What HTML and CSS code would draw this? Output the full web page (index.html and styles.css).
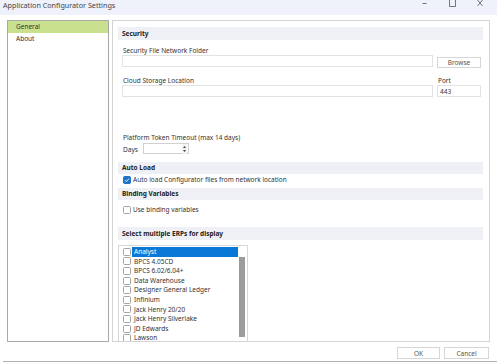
FILE: index.html
```html
<!DOCTYPE html>
<html>
<head>
  <meta charset="utf-8">
  <title>Application Configurator Settings</title>
  <link rel="stylesheet" href="styles.css">
</head>
<body>
  <div class="titlebar">
    <div class="title">Application Configurator Settings</div>
    <div class="window-controls">
      <svg class="ctl" width="6" height="10" viewBox="0 0 6 10"><path d="M0.5 5.5h4" stroke="#555" stroke-width="0.8"/></svg>
      <svg class="ctl" width="7" height="10" viewBox="0 0 7 10"><path d="M0.5 0v8.5h6v-8.5" fill="none" stroke="#555" stroke-width="0.8"/></svg>
      <svg class="ctl" width="6" height="10" viewBox="0 0 6 10"><path d="M0.5 2l5 6M5.5 2l-5 6" stroke="#555" stroke-width="0.8"/></svg>
    </div>
  </div>

  <div class="main">
    <div class="nav">
      <div class="nav-item active">General</div>
      <div class="nav-item">About</div>
    </div>

    <div class="content">
      <div class="section-header first">Security</div>
      <div class="field-grid">
        <div class="field-label">Security File Network Folder</div>
        <div></div>
        <input type="text" class="text-input">
        <button class="btn browse">Browse</button>
        <div class="field-label spaced">Cloud Storage Location</div>
        <div class="field-label spaced">Port</div>
        <input type="text" class="text-input">
        <input type="text" class="text-input" value="443">
      </div>

      <div class="field-label token">Platform Token Timeout (max 14 days)</div>
      <div class="days-row">
        <span class="days-label">Days</span>
        <div class="spinner">
          <svg class="spin-arrows" width="5" height="10" viewBox="0 0 5 10">
            <rect x="0" y="0" width="5" height="10" fill="#f2f2f2"/>
            <path d="M1 4l1.5-2 1.5 2z M1 6l1.5 2 1.5-2z" fill="#444"/>
          </svg>
        </div>
      </div>

      <div class="section-header auto">Auto Load</div>
      <div class="check-row">
        <span class="checkbox checked">
          <svg width="6" height="6" viewBox="0 0 6 6"><path d="M1 3.2l1.4 1.4 2.6-3" fill="none" stroke="#fff" stroke-width="0.9"/></svg>
        </span>
        <span>Auto load Configurator files from network location</span>
      </div>

      <div class="section-header binding">Binding Variables</div>
      <div class="check-row binding-row">
        <span class="checkbox"></span>
        <span>Use binding variables</span>
      </div>

      <div class="section-header erp">Select multiple ERPs for display</div>
      <div class="listbox">
        <div class="list-items">
          <div class="list-item selected"><span class="checkbox"></span><span class="item-text">Analyst</span></div>
          <div class="list-item"><span class="checkbox"></span><span class="item-text">BPCS 4.05CD</span></div>
          <div class="list-item"><span class="checkbox"></span><span class="item-text">BPCS 6.02/6.04+</span></div>
          <div class="list-item"><span class="checkbox"></span><span class="item-text">Data Warehouse</span></div>
          <div class="list-item"><span class="checkbox"></span><span class="item-text">Designer General Ledger</span></div>
          <div class="list-item"><span class="checkbox"></span><span class="item-text">Infinium</span></div>
          <div class="list-item"><span class="checkbox"></span><span class="item-text">Jack Henry 20/20</span></div>
          <div class="list-item"><span class="checkbox"></span><span class="item-text">Jack Henry Silverlake</span></div>
          <div class="list-item"><span class="checkbox"></span><span class="item-text">JD Edwards</span></div>
          <div class="list-item"><span class="checkbox"></span><span class="item-text">Lawson</span></div>
        </div>
        <div class="scrollbar"><div class="thumb"></div></div>
      </div>
    </div>
  </div>

  <div class="footer">
    <button class="btn ok">OK</button>
    <button class="btn cancel">Cancel</button>
  </div>
</body>
</html>
```

FILE: styles.css
```css
body {
  margin: 0;
  width: 497px;
  height: 364px;
  overflow: hidden;
  background: #fff;
  font-family: "Noto Sans", "Open Sans", sans-serif;
  font-size: 6.5px;
  color: #333;
}

.titlebar {
  display: flex;
  justify-content: space-between;
  height: 15px;
  background: #eff2fa;
  overflow: hidden;
}

.title {
  padding-left: 3px;
  margin-top: -1px;
  font-size: 7.2px;
  line-height: 12px;
  color: #444;
}

.window-controls {
  display: flex;
  gap: 21px;
  padding-right: 14px;
  margin-top: -2px;
}

.main {
  display: flex;
  gap: 3px;
  padding: 5px 7px 0 7px;
}

.nav {
  width: 102px;
  height: 322px;
  box-sizing: border-box;
  border: 1px solid #a9a9a9;
}

.nav-item {
  height: 12px;
  line-height: 12px;
  padding-left: 8px;
}

.nav-item.active {
  background: #c9e18f;
}

.content {
  width: 378px;
  height: 322px;
  box-sizing: border-box;
  border: 1px solid #d4d4d4;
  padding: 6px 6px 0 5px;
  overflow: hidden;
}

.section-header {
  height: 12px;
  line-height: 12px;
  padding-left: 4px;
  background: #eef0f5;
  font-weight: bold;
  color: #222;
}

.section-header.first {
  height: 13px;
  line-height: 13px;
}

.field-grid {
  display: grid;
  grid-template-columns: 311px 44px;
  column-gap: 4px;
  padding-left: 4px;
  margin-top: 6px;
}

.field-label {
  height: 9px;
  line-height: 9px;
  padding-left: 1px;
}

.field-label.spaced {
  margin-top: 8px;
}

.text-input {
  font: inherit;
  color: #333;
  height: 12px;
  box-sizing: border-box;
  margin: 0;
  padding: 0 2px;
  border: 1px solid #e2e2e2;
  outline: none;
}

.btn {
  font: inherit;
  color: #555;
  height: 12px;
  box-sizing: border-box;
  margin: 0;
  padding: 0;
  background: #fff;
  border: 1px solid #d6d6d6;
}

.browse {
  height: 11px;
  margin-top: 2px;
}

.token {
  margin-top: 36px;
  padding-left: 5px;
}

.days-row {
  display: flex;
  align-items: center;
  padding-left: 5px;
  margin-top: 1px;
}

.days-label {
  width: 20px;
  line-height: 9px;
  padding-top: 1px;
}

.spinner {
  width: 46px;
  height: 11px;
  box-sizing: border-box;
  border: 1px solid #d0d0d0;
  display: flex;
  justify-content: flex-end;
  align-items: center;
}

.spin-arrows {
  margin-right: 1px;
}

.section-header.auto {
  margin-top: 8px;
}

.check-row {
  display: flex;
  align-items: center;
  gap: 2px;
  height: 9px;
  margin-top: 1px;
  padding-left: 5px;
}

.checkbox {
  width: 8px;
  height: 8px;
  box-sizing: border-box;
  border: 1px solid #a3a3a3;
  border-radius: 1.5px;
  background: #fff;
  display: flex;
  align-items: center;
  justify-content: center;
  flex-shrink: 0;
}

.checkbox.checked {
  background: #1f73c9;
  border-color: #1f73c9;
}

.section-header.binding {
  margin-top: 4px;
}

.check-row.binding-row {
  margin-top: 5px;
}

.section-header.erp {
  height: 13px;
  line-height: 13px;
  margin-top: 13px;
}

.listbox {
  display: flex;
  width: 130px;
  height: 110px;
  box-sizing: border-box;
  margin-top: 5px;
  border: 1px solid #d8d8d8;
}

.list-items {
  flex: 1;
  padding: 1px 0 0 4px;
}

.list-item {
  display: flex;
  align-items: center;
  height: 9.6px;
}

.item-text {
  flex: 1;
  margin-left: 1px;
  padding-left: 2px;
  line-height: 9.6px;
}

.list-item.selected .item-text {
  background: #0a78d7;
  color: #fff;
}

.scrollbar {
  width: 9px;
  padding-top: 11px;
}

.thumb {
  width: 6px;
  height: 80px;
  margin-left: 1px;
  background: #9c9c9c;
}

.footer {
  display: flex;
  justify-content: flex-end;
  gap: 4px;
  height: 20px;
  box-sizing: border-box;
  padding: 5px 8px 0 0;
  margin-left: 3px;
  border-bottom: 1px solid #b0b0b0;
}

.ok {
  width: 43px;
}

.cancel {
  width: 45px;
}
```
